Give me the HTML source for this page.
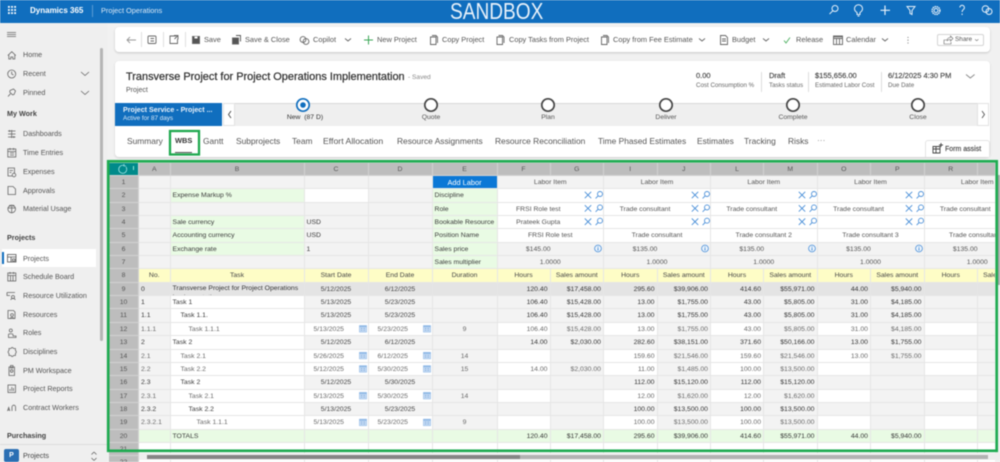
<!DOCTYPE html>
<html lang="en"><head><meta charset="utf-8"><title>Project Operations</title>
<style>
*{box-sizing:border-box}
html,body{margin:0;padding:0;width:1000px;height:462px;overflow:hidden;background:#f1f1f1;font-family:"Liberation Sans",sans-serif}
#w{position:relative;width:1000px;height:462px;overflow:hidden;filter:blur(.4px)}
.a{position:absolute}
.t{position:absolute;white-space:nowrap;line-height:12px;margin-top:-6px;font-size:7.2px;color:#555}
.h{font-weight:bold;color:#444}
.c{transform:translateX(-50%)}
.k{font-size:7.4px;color:#555}
.tb{font-size:8.4px;color:#555}
.v{font-size:7.5px;color:#444;-webkit-text-stroke:.15px #444}
#g{position:absolute;left:109px;top:162.5px;width:886px;height:300px;overflow:hidden;display:grid;
grid-template-columns:30px 31.5px 134px 64px 64px 65px 53px 53.5px 53.5px 53.5px 53px 53.5px 53.5px 53.5px 53.5px 53px;
grid-auto-rows:13.36px;background:#fff;font-size:6.85px;color:#3a3a3a;line-height:13px}
#g p{margin:0;background:#f3f3f3;border-right:1px solid #e6e6e6;border-bottom:1px solid #e6e6e6;padding:0 2px;white-space:nowrap;overflow:hidden;min-width:0}
#g p.H{background:#bdbdbd;color:#555;text-align:center;border-color:#d2d2d2}
#g p.w{background:#fff}
#g p.g{background:#e9fbe4}
#g p.y{background:#fefdc6;text-align:center;color:#444}
#g p.d{background:#e4e4e4;color:#333}
#g p.n{text-align:right;color:#333}
#g p.l{color:#6a6a6a}
#g p.w.l{padding-left:9px}
#g p.m{text-align:center;color:#444}
#g p.q{text-align:center;color:#6a6a6a}
#g p.s2{grid-column:span 2;text-align:center;color:#555}
#g p.i{padding-right:26px}
#g p.b{background:#0b78d6;color:#fff;text-align:center;font-size:7.4px}
#g p.T{background:#008a8a}
.p1{padding-left:10px!important}.p2{padding-left:18px!important}.p3{padding-left:26px!important}
</style></head><body><div id="w">

<div class="a" style="left:0;top:0;width:1000px;height:23px;background:#106ebe"></div>
<div class="t" style="left:30px;top:10.5px;font-size:8px;font-weight:bold;color:#fff">Dynamics 365</div>
<div class="a" style="left:92px;top:5px;width:1px;height:12px;background:#5a9bd4"></div>
<div class="t" style="left:101px;top:10.5px;font-size:7.4px;color:#dbe9f6">Project Operations</div>
<div class="t" style="left:450px;top:10.5px;font-size:23px;color:#e8f1fa;line-height:24px;margin-top:-12px;transform:scaleX(.83);transform-origin:0 50%">SANDBOX</div>

<!-- sidebar -->
<div class="a" style="left:0;top:23px;width:107px;height:439px;background:#efefef"></div>
<div class="a" style="left:100px;top:48px;width:3px;height:293px;background:#b5b5b5;border-radius:2px"></div>
<div class="a" style="left:2px;top:249px;width:94px;height:18px;background:#fff"></div>
<div class="a" style="left:2px;top:252px;width:2px;height:12px;background:#106ebe"></div>
<div class="t" style="left:23px;top:55px">Home</div>
<div class="t" style="left:23px;top:74px">Recent</div>
<div class="t" style="left:23px;top:92.5px">Pinned</div>
<div class="t h" style="left:7px;top:113.5px">My Work</div>
<div class="t" style="left:23px;top:134px">Dashboards</div>
<div class="t" style="left:23px;top:153px">Time Entries</div>
<div class="t" style="left:23px;top:172px">Expenses</div>
<div class="t" style="left:23px;top:190.5px">Approvals</div>
<div class="t" style="left:23px;top:209px">Material Usage</div>
<div class="t h" style="left:7px;top:237.5px">Projects</div>
<div class="t" style="left:23px;top:258.5px">Projects</div>
<div class="t" style="left:23px;top:277px">Schedule Board</div>
<div class="t" style="left:23px;top:296px">Resource Utilization</div>
<div class="t" style="left:23px;top:314.5px">Resources</div>
<div class="t" style="left:23px;top:333px">Roles</div>
<div class="t" style="left:23px;top:352px">Disciplines</div>
<div class="t" style="left:23px;top:370.5px">PM Workspace</div>
<div class="t" style="left:23px;top:389px">Project Reports</div>
<div class="t" style="left:23px;top:408px">Contract Workers</div>
<div class="t h" style="left:7px;top:436px">Purchasing</div>
<div class="a" style="left:0;top:444px;width:107px;height:1px;background:#dcdcdc"></div>
<div class="a" style="left:4px;top:449px;width:15px;height:13px;background:#2b6fb3;border-radius:2px;color:#fff;font-size:7px;font-weight:bold;text-align:center;line-height:13px">P</div>
<div class="t" style="left:23px;top:456px;color:#444">Projects</div>

<!-- command bar -->
<div class="a" style="left:115px;top:27px;width:875px;height:25px;background:#fff;border-radius:4px;box-shadow:0 1px 2px rgba(0,0,0,.18)"></div>
<div class="t k" style="left:204px;top:40px">Save</div>
<div class="t k" style="left:245px;top:40px">Save &amp; Close</div>
<div class="t k" style="left:313px;top:40px">Copilot</div>
<div class="t k" style="left:377px;top:40px">New Project</div>
<div class="t k" style="left:442px;top:40px">Copy Project</div>
<div class="t k" style="left:509px;top:40px">Copy Tasks from Project</div>
<div class="t k" style="left:613px;top:40px">Copy from Fee Estimate</div>
<div class="t k" style="left:732px;top:40px">Budget</div>
<div class="t k" style="left:796px;top:40px">Release</div>
<div class="t k" style="left:846px;top:40px">Calendar</div>
<div class="a" style="left:937px;top:34px;width:47px;height:12px;border:1px solid #d5d5d5;border-radius:2px"></div>
<div class="t" style="left:955px;top:40px;font-size:6.4px">Share</div>

<!-- header card -->
<div class="a" style="left:115px;top:61px;width:875px;height:96px;background:#fff;border-radius:4px;box-shadow:0 1px 2px rgba(0,0,0,.15)"></div>
<div class="t" style="left:126px;top:77px;font-size:10.95px;color:#333;-webkit-text-stroke:.25px #333">Transverse Project for Project Operations Implementation</div>
<div class="t" style="left:408px;top:77.5px;font-size:6.6px;color:#888">- Saved</div>
<div class="t" style="left:126px;top:90.5px;font-size:7px;color:#555">Project</div>
<div class="t v" style="left:696px;top:76px">0.00</div>
<div class="t" style="left:696px;top:86px;font-size:6.2px;color:#666">Cost Consumption %</div>
<div class="a" style="left:761px;top:72px;width:1px;height:20px;background:#ddd"></div>
<div class="t v" style="left:769px;top:76px">Draft</div>
<div class="t" style="left:769px;top:86px;font-size:6.2px;color:#666">Tasks status</div>
<div class="a" style="left:808px;top:72px;width:1px;height:20px;background:#ddd"></div>
<div class="t v" style="left:815px;top:76px">$155,656.00</div>
<div class="t" style="left:815px;top:86px;font-size:6.2px;color:#666">Estimated Labor Cost</div>
<div class="a" style="left:881px;top:72px;width:1px;height:20px;background:#ddd"></div>
<div class="t v" style="left:888px;top:76px">6/12/2025 4:30 PM</div>
<div class="t" style="left:888px;top:86px;font-size:6.2px;color:#666">Due Date</div>

<!-- BPF -->
<div class="a" style="left:115px;top:103px;width:107px;height:22.5px;background:#106ebe"></div>
<div class="t" style="left:123px;top:109.5px;font-size:7.1px;font-weight:bold;color:#e8f1fa">Project Service - Project ...</div>
<div class="t" style="left:123px;top:118.5px;font-size:6.3px;color:#dbe9f6">Active for 87 days</div>
<div class="a" style="left:223px;top:103px;width:12px;height:22.5px;background:#fff;border:1px solid #e2e2e2"></div>
<div class="a" style="left:235px;top:103px;width:742px;height:22.5px;background:#efefef;border-top:1px solid #d8d8d8"></div>
<div class="a" style="left:977px;top:103px;width:12px;height:22.5px;background:#fff;border:1px solid #e2e2e2"></div>
<div class="t c" style="left:305px;top:118px;font-size:6.8px;color:#333">New&nbsp; (87 D)</div>
<div class="t c" style="left:431px;top:118px;font-size:6.8px">Quote</div>
<div class="t c" style="left:548px;top:118px;font-size:6.8px">Plan</div>
<div class="t c" style="left:666px;top:118px;font-size:6.8px">Deliver</div>
<div class="t c" style="left:793px;top:118px;font-size:6.8px">Complete</div>
<div class="t c" style="left:918px;top:118px;font-size:6.8px">Close</div>

<!-- tabs -->
<div class="t tb" style="left:127px;top:141px">Summary</div>
<div class="t tb" style="left:175px;top:141px;font-weight:bold;color:#333;font-size:7.4px">WBS</div>
<div class="a" style="left:175px;top:152px;width:17px;height:1px;background:#555"></div>
<div class="t tb" style="left:203px;top:141px">Gantt</div>
<div class="t tb" style="left:236px;top:141px">Subprojects</div>
<div class="t tb" style="left:292px;top:141px">Team</div>
<div class="t tb" style="left:323px;top:141px;font-size:8.7px">Effort Allocation</div>
<div class="t tb" style="left:397px;top:141px">Resource Assignments</div>
<div class="t tb" style="left:495px;top:141px">Resource Reconciliation</div>
<div class="t tb" style="left:598px;top:141px">Time Phased Estimates</div>
<div class="t tb" style="left:697px;top:141px">Estimates</div>
<div class="t tb" style="left:744px;top:141px">Tracking</div>
<div class="t tb" style="left:788px;top:141px">Risks</div>
<div class="t tb" style="left:817px;top:140px;color:#888">···</div>
<div class="a" style="left:925px;top:140px;width:65px;height:17px;background:#fff;border:1px solid #e4e4e4;border-bottom:0;border-radius:3px 3px 0 0"></div>
<div class="t" style="left:945px;top:149.5px;font-size:7px;color:#444;-webkit-text-stroke:.15px #444">Form assist</div>

<!-- grid -->
<div id="g">
<p class="H T"><p class="H">A<p class="H">B<p class="H">C<p class="H">D<p class="H">E<p class="H">F<p class="H">G<p class="H">I<p class="H">J<p class="H">L<p class="H">M<p class="H">O<p class="H">P<p class="H">R<p class="H">

<p class="H">1<p><p><p><p><p class="b">Add Labor<p class="s2">Labor Item<p class="s2">Labor Item<p class="s2">Labor Item<p class="s2">Labor Item<p class="s2">Labor Item

<p class="H">2<p><p class="g">Expense Markup %<p class="w"><p><p class="g">Discipline<p class="s2 w i"><p class="s2 w i"><p class="s2 w i"><p class="s2 w i"><p class="s2 w i">

<p class="H">3<p><p><p><p><p class="g">Role<p class="s2 w i">FRSI Role test<p class="s2 w i">Trade consultant<p class="s2 w i">Trade consultant<p class="s2 w i">Trade consultant<p class="s2 w i">Trade consultant

<p class="H">4<p><p class="g">Sale currency<p>USD<p><p class="g">Bookable Resource<p class="s2 w i">Prateek Gupta<p class="s2 w i"><p class="s2 w i"><p class="s2 w i"><p class="s2 w i">

<p class="H">5<p><p class="g">Accounting currency<p>USD<p><p class="g">Position Name<p class="s2 w">FRSI Role test<p class="s2 w">Trade consultant<p class="s2 w">Trade consultant 2<p class="s2 w">Trade consultant 3<p class="s2 w">Trade consultant 4

<p class="H">6<p><p class="g">Exchange rate<p>1<p><p class="g">Sales price<p class="s2 i">$145.00<p class="s2 i">$135.00<p class="s2 i">$135.00<p class="s2 i">$135.00<p class="s2 i">$135.00

<p class="H">7<p><p><p><p><p class="g">Sales multiplier<p class="s2">1.0000<p class="s2">1.0000<p class="s2">1.0000<p class="s2">1.0000<p class="s2">1.0000

<p class="H">8<p class="y">No.<p class="y">Task<p class="y">Start Date<p class="y">End Date<p class="y">Duration<p class="y">Hours<p class="y">Sales amount<p class="y">Hours<p class="y">Sales amount<p class="y">Hours<p class="y">Sales amount<p class="y">Hours<p class="y">Sales amount<p class="y">Hours<p class="y">Sales amount

<p class="H">9<p class="d">0<p class="d" style="white-space:normal;line-height:8.5px;padding-top:2.5px">Transverse Project for Project Operations Implementation<p class="d m">5/12/2025<p class="d m">6/12/2025<p class="d"><p class="d n">120.40<p class="d n">$17,458.00<p class="d n">295.60<p class="d n">$39,906.00<p class="d n">414.60<p class="d n">$55,971.00<p class="d n">44.00<p class="d n">$5,940.00<p class="d"><p class="d">

<p class="H">10<p>1<p class="w">Task 1<p class="m">5/13/2025<p class="m">5/23/2025<p><p class="n">106.40<p class="n">$15,428.00<p class="n">13.00<p class="n">$1,755.00<p class="n">43.00<p class="n">$5,805.00<p class="n">31.00<p class="n">$4,185.00<p><p>

<p class="H">11<p>1.1<p class="w p1">Task 1.1.<p class="m">5/13/2025<p class="m">5/23/2025<p><p class="n">106.40<p class="n">$15,428.00<p class="n">13.00<p class="n">$1,755.00<p class="n">43.00<p class="n">$5,805.00<p class="n">31.00<p class="n">$4,185.00<p><p>

<p class="H">12<p class="l">1.1.1<p class="w p2 l">Task 1.1.1<p class="w l">5/13/2025<p class="w l">5/23/2025<p class="q">9<p class="w n l">106.40<p class="n l">$15,428.00<p class="w n l">13.00<p class="n l">$1,755.00<p class="w n l">43.00<p class="n l">$5,805.00<p class="w n l">31.00<p class="n l">$4,185.00<p class="w"><p>

<p class="H">13<p>2<p class="w">Task 2<p class="m">5/12/2025<p class="m">6/12/2025<p><p class="n">14.00<p class="n">$2,030.00<p class="n">282.60<p class="n">$38,151.00<p class="n">371.60<p class="n">$50,166.00<p class="n">13.00<p class="n">$1,755.00<p><p>

<p class="H">14<p class="l">2.1<p class="w p1 l">Task 2.1<p class="w l">5/26/2025<p class="w l">6/12/2025<p class="q">14<p class="w n l"><p class="n l"><p class="w n l">159.60<p class="n l">$21,546.00<p class="w n l">159.60<p class="n l">$21,546.00<p class="w n l">13.00<p class="n l">$1,755.00<p class="w"><p>

<p class="H">15<p class="l">2.2<p class="w p1 l">Task 2.2<p class="w l">5/12/2025<p class="w l">5/30/2025<p class="q">15<p class="w n l">14.00<p class="n l">$2,030.00<p class="w n l">11.00<p class="n l">$1,485.00<p class="w n l">100.00<p class="n l">$13,500.00<p class="w n l"><p class="n l"><p class="w"><p>

<p class="H">16<p>2.3<p class="w p1">Task 2<p class="m">5/12/2025<p class="m">5/30/2025<p><p class="n"><p class="n"><p class="n">112.00<p class="n">$15,120.00<p class="n">112.00<p class="n">$15,120.00<p class="n"><p class="n"><p><p>

<p class="H">17<p class="l">2.3.1<p class="w p2 l">Task 2.1<p class="w l">5/13/2025<p class="w l">5/30/2025<p class="q">14<p class="w n l"><p class="n l"><p class="w n l">12.00<p class="n l">$1,620.00<p class="w n l">12.00<p class="n l">$1,620.00<p class="w n l"><p class="n l"><p class="w"><p>

<p class="H">18<p>2.3.2<p class="w p2">Task 2.2<p class="m">5/13/2025<p class="m">5/23/2025<p><p class="n"><p class="n"><p class="n">100.00<p class="n">$13,500.00<p class="n">100.00<p class="n">$13,500.00<p class="n"><p class="n"><p><p>

<p class="H">19<p class="l">2.3.2.1<p class="w p3 l">Task 1.1.1<p class="w l">5/13/2025<p class="w l">5/23/2025<p class="q">9<p class="w n l"><p class="n l"><p class="w n l">100.00<p class="n l">$13,500.00<p class="w n l">100.00<p class="n l">$13,500.00<p class="w n l"><p class="n l"><p class="w"><p>

<p class="H">20<p class="g"><p class="g">TOTALS<p class="g"><p class="g"><p class="g"><p class="g n">120.40<p class="g n">$17,458.00<p class="g n">295.60<p class="g n">$39,906.00<p class="g n">414.60<p class="g n">$55,971.00<p class="g n">44.00<p class="g n">$5,940.00<p class="g"><p class="g">

<p class="H">21<p class="w"><p class="w"><p class="w"><p class="w"><p class="w"><p class="w"><p class="w"><p class="w"><p class="w"><p class="w"><p class="w"><p class="w"><p class="w"><p class="w"><p class="w">

<p class="H">22<p class="w"><p class="w"><p class="w"><p class="w"><p class="w"><p class="w"><p class="w"><p class="w"><p class="w"><p class="w"><p class="w"><p class="w"><p class="w"><p class="w"><p class="w">
</div>

<!-- scrollbars -->
<div class="a" style="left:139px;top:453px;width:861px;height:7px;background:#eee"></div>
<div class="a" style="left:147px;top:455px;width:841px;height:4px;background:#b2b2b2"></div>
<div class="a" style="left:147px;top:455px;width:373px;height:4px;background:#858585"></div>
<div class="a" style="left:998px;top:175px;width:2px;height:110px;background:#a8a8a8"></div>

<!-- icon overlay -->
<svg class="a" style="left:0;top:0" width="1000" height="462" viewBox="0 0 1000 462" fill="none">
<defs>
<symbol id="x" viewBox="0 0 8 8" overflow="visible"><path d="M.8.8l6.4 6.4M7.2.8L.8 7.2" stroke="#4a8fd8" stroke-width=".9"/></symbol>
<symbol id="s" viewBox="0 0 8 8" overflow="visible"><circle cx="5" cy="3" r="2.5" stroke="#4a8fd8" stroke-width=".9"/><path d="M3.2 4.8L.6 7.4" stroke="#4a8fd8" stroke-width=".9"/></symbol>
<symbol id="c" viewBox="0 0 8 8" overflow="visible"><rect x=".4" y="1" width="7.2" height="6.6" fill="#c4daf3" stroke="#8fb8e6" stroke-width=".5"/><rect x=".4" y="1" width="7.2" height="1.6" fill="#8fb8e6"/><path d="M2 4h1.2M4.6 4h1.2M2 5.8h1.2M4.6 5.8h1.2" stroke="#6f9fd8" stroke-width=".7"/></symbol>
<symbol id="f" viewBox="0 0 8 8" overflow="visible"><circle cx="4" cy="4" r="3.4" stroke="#4a8fd8" stroke-width=".8" fill="#eaf3fc"/><path d="M4 3.4v2.6M4 2v.8" stroke="#4a8fd8" stroke-width=".9"/></symbol>
</defs>

<!-- green highlight boxes -->
<rect x="108.200" y="161.300" width="888.500" height="289.500" stroke="#1fab52" stroke-width="2.700"/>
<rect x="170" y="131" width="29" height="23.500" stroke="#1fa84f" stroke-width="2.300"/>

<!-- grid icons -->
<g id="rowX">
<use href="#x" x="584" y="191" width="8" height="8"/><use href="#s" x="595" y="191" width="8" height="8"/>
<use href="#x" x="691" y="191" width="8" height="8"/><use href="#s" x="702" y="191" width="8" height="8"/>
<use href="#x" x="798" y="191" width="8" height="8"/><use href="#s" x="809" y="191" width="8" height="8"/>
<use href="#x" x="905" y="191" width="8" height="8"/><use href="#s" x="916" y="191" width="8" height="8"/>
</g>
<use href="#rowX" y="13.4"/><use href="#rowX" y="26.7"/>
<use href="#f" x="594" y="244.5" width="8" height="8"/><use href="#f" x="701" y="244.5" width="8" height="8"/><use href="#f" x="808" y="244.5" width="8" height="8"/><use href="#f" x="915" y="244.5" width="8" height="8"/>
<g id="cal"><use href="#c" x="359" y="324.5" width="8" height="8"/><use href="#c" x="423" y="324.5" width="8" height="8"/></g>
<use href="#cal" y="26.8"/><use href="#cal" y="40.1"/><use href="#cal" y="66.9"/><use href="#cal" y="93.6"/>

<!-- corner refresh -->
<path d="M126 167a4 4 0 1 1-2-1.5M124 164v2h2" stroke="#9fe3e3" stroke-width=".8"/>
<path d="M133.500 166v4" stroke="#bfe" stroke-width=".8"/>

<!-- top bar -->
<g fill="#fff"><rect x="8" y="6" width="1.800" height="1.800"/><rect x="11.100" y="6" width="1.800" height="1.800"/><rect x="14.200" y="6" width="1.800" height="1.800"/><rect x="8" y="9.100" width="1.800" height="1.800"/><rect x="11.100" y="9.100" width="1.800" height="1.800"/><rect x="14.200" y="9.100" width="1.800" height="1.800"/><rect x="8" y="12.200" width="1.800" height="1.800"/><rect x="11.100" y="12.200" width="1.800" height="1.800"/><rect x="14.200" y="12.200" width="1.800" height="1.800"/></g>
<g stroke="#e8f1fa" stroke-width="1">
<circle cx="835" cy="8.500" r="3"/><path d="M832.800 10.800L829.500 14"/>
<path d="M857 12.500c-1.500-1-2.500-2-2.500-3.800a4 4 0 0 1 8 0c0 1.800-1 2.800-2.500 3.800v2h-3zM857.500 16h2"/>
<path d="M885 5.500v9.500M880.500 10.300h9.500" stroke-width="1.200"/>
<path d="M907 6.500h8l-3 4v4l-2-1v-3z"/>
<circle cx="936" cy="10.500" r="2"/><circle cx="936" cy="10.500" r="3.900" stroke-dasharray="1.500 .6" stroke-width="1.400"/>
<path d="M959.800 7.500a2.300 2.300 0 1 1 3.600 2c-1 .7-1.300 1.200-1.300 2.500M962.100 13.500v1.500"/>
<circle cx="985.500" cy="9" r="3.300"/><circle cx="989" cy="11.500" r="3"/>
</g>

<!-- sidebar icons -->
<g stroke="#666" stroke-width=".8">
<path d="M7 32.500h9M7 34.500h9M7 36.500h9"/>
<path d="M7.800 55.500l4-3.800 4 3.800M8.800 54.700V59h2v-2h2v2h2v-4.300"/>
<circle cx="11.700" cy="74" r="4"/><path d="M11.700 71.500V74l1.800 1"/>
<path d="M8 96.500l2.500-2.800M10 90.500l3.500-1.500 2 2-1.500 3.500-1.500.3-2.800-2.800z"/>
<path d="M8 131h7.500M8 134h7.500M8 137h7.500M11.700 130v8M9.500 130v2M13.800 136v2"/>
<rect x="7.800" y="149" width="8" height="8"/><path d="M7.800 151.500h8M10 148v2M13.500 148v2M10 153h4M10 155h4"/>
<path d="M8 168h6.500v8H8zM9.500 170.500h3.500M9.500 172.500h2"/><circle cx="14" cy="175" r="1.800" fill="#efefef"/>
<path d="M8 186.500h5l2.500 2.500v5.500H8z"/>
<circle cx="11.700" cy="209" r="3.800"/><path d="M8 208h7.500M11.700 205.500v7M9.500 205l1 1.500M14 205l-1 1.500"/>
<rect x="7.500" y="254.500" width="8.500" height="7.500" stroke="#555"/><path d="M7.500 257h8.500M11 257v5M12.500 259h2.500v2h-2.500z" stroke="#555"/>
<rect x="7.800" y="273" width="8" height="8"/><path d="M7.800 275.500h8M10 272v2M13.500 272v2M10.500 275.500v5.500M13 275.500v5.500"/>
<path d="M7 292.500h8M7 292.500v3h3"/><circle cx="13" cy="297" r="1.500"/><path d="M10.800 300c0-2 4.400-2 4.400 0"/>
<path d="M8 310.500h5.500l1.500 1.500v6.500H8z"/><circle cx="12" cy="315" r="1.400"/><path d="M10 319c0-2 4-2 4 0"/>
<circle cx="10.800" cy="330.500" r="1.500"/><path d="M8.500 336v-1.500c0-1 4.500-1 4.500 0V336h3v1.500H8.500z"/>
<path d="M9 348.500h2l.7-1h1l.7 1h2v2l.8.8v1.400l-.8.8v2h-2l-.7 1h-1l-.7-1H9v-2l-.8-.8v-1.400l.8-.8z"/>
<path d="M9 367h5.500v8.500H9zM10.500 365.500h2.500V368h-2.500z"/><circle cx="11.700" cy="371" r="1.300"/>
<rect x="8" y="385" width="7.500" height="7.500"/><path d="M10 391v-2M11.800 391v-4M13.500 391v-3"/>
<path d="M7.500 411l1.200-3.500 1.200 3.500M12 411v-4a1.800 1.800 0 0 1 3.600 0v4M8 410h2"/>
<path d="M94 452l-2.500 2.500M94 452l2.500 2.500M94 460.500l-2.500-2.500M94 460.500l2.500-2.500"/>
<path d="M81 72l4 3.500 4-3.500M81 91l4 3.500 4-3.500"/>
</g>

<!-- command icons -->
<g stroke="#666" stroke-width=".9">
<path d="M136 40h-9M130 37l-3 3 3 3" stroke="#999"/>
<path d="M141.500 32v15M163.500 32v15M185.500 32v15" stroke="#ddd"/>
<rect x="148" y="36" width="8" height="7.500" rx="1"/><path d="M150.500 38.500h3.500M150.500 41h3.500"/>
<path d="M176 36h-6v7.500h7.500V39M174 35.500h4v4M178 35.500l-3.500 3.500"/>
<path d="M192.500 36.500h7v7h-7z" fill="#555"/><path d="M194.500 36.500h3v2h-3z" fill="#fff" stroke="none"/>
<path d="M232.500 38h6v6h-6z" fill="#555"/><path d="M236 35.500h4.500v6" stroke="#555"/>
<circle cx="303" cy="39.500" r="2.900"/><circle cx="306" cy="41.500" r="2.900"/>
<path d="M345 38.500l3 2.500 3-2.500M699 38.500l3 2.500 3-2.500M763 38.500l3 2.500 3-2.500M882 38.500l3 2.500 3-2.500"/>
<path d="M368.500 35.500v9M364 40h9" stroke="#3aa655" stroke-width="1"/>
<path d="M430.500 37h5.500v7.500h-5.500zM432 35.500h4l1.500 1.500v6"/>
<path d="M497 37h5.500v7.500H497zM498.500 35.500h4l1.500 1.500v6"/>
<path d="M601.500 37h5.500v7.500h-5.500zM603 35.500h4l1.500 1.500v6"/>
<path d="M720.500 35.500h5l2 2v7h-7zM722 39h4M722 41h4"/>
<path d="M784 40.500l2 2.500 4-5.500" stroke="#4caf60"/>
<rect x="833.500" y="36" width="9" height="8.500"/><path d="M833.500 38.500h9M836.500 38.500v6M839.500 38.500v6" /><path d="M833.500 36.500h9" stroke-width="1.600"/>
<path d="M908 37v.8M908 39.800v.8M908 42.600v.8" stroke-width="1.100"/>
<path d="M948 40h-4v4h7v-2M947 39.500c1-1.500 2-2 3.500-2V36l2.500 2.500-2.500 2.500v-1.500c-1.300 0-2.500.3-3.500 1.500" stroke-width=".6"/>
<path d="M975 39.300l1.700 1.400 1.700-1.400" stroke-width=".6"/>
<path d="M966 74.500l4.300 3.500 4.300-3.500" stroke="#888"/>
<path d="M231 111l-2.500 3.500 2.500 3.500" stroke="#444"/>
<path d="M982 111l2.500 3.500-2.500 3.500" stroke="#555"/>
<path d="M933 146.500h7v6.500h-7zM933 149h7M936 146.500v6.500M941 143v4M939 145h4" stroke="#444"/>
</g>

<!-- BPF circles -->
<g fill="#fff" stroke="#444" stroke-width="1.700">
<circle cx="431" cy="105" r="6.200"/><circle cx="548" cy="105" r="6.200"/><circle cx="666" cy="105" r="6.200"/><circle cx="793" cy="105" r="6.200"/><circle cx="918" cy="105" r="6.200"/>
<circle cx="303" cy="105" r="6.200" stroke="#106ebe"/>
</g>
<circle cx="303" cy="105" r="2.800" fill="#106ebe"/>
</svg>
</div></body></html>
